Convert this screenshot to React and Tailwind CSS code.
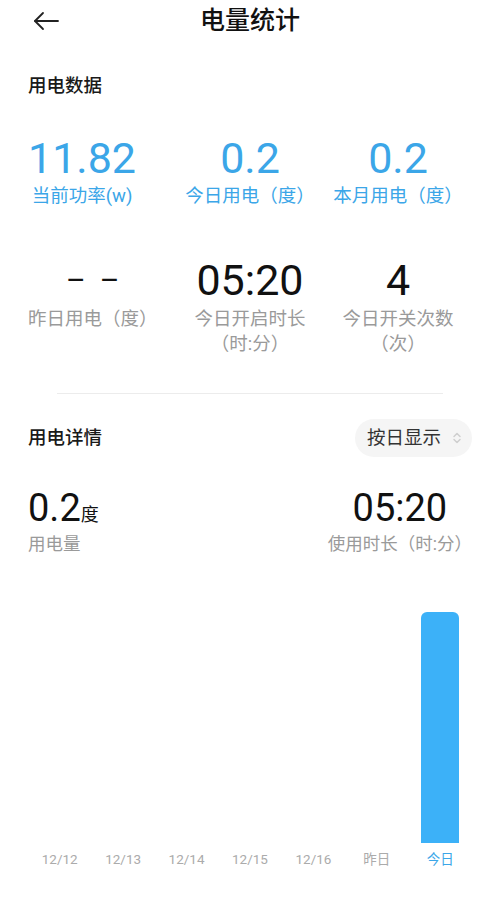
import React from "react";

const FONT = { fontFamily: 'Roboto, "Noto Sans CJK SC", sans-serif' };

function BackArrow() {
  return (
    <svg width="26" height="20" viewBox="0 0 26 20" fill="none" stroke="#222" strokeWidth="1.8" strokeLinecap="round" strokeLinejoin="round">
      <path d="M25 10H2" />
      <path d="M10 2L2 10L10 18" />
    </svg>
  );
}

function UpDown() {
  return (
    <svg width="10" height="14" viewBox="0 0 10 14" fill="none" stroke="#cfcfcf" strokeWidth="1.5" strokeLinecap="round" strokeLinejoin="round">
      <path d="M2 5.5L5 2.5L8 5.5" />
      <path d="M2 8.5L5 11.5L8 8.5" />
    </svg>
  );
}

const days = ["12/12", "12/13", "12/14", "12/15", "12/16", "昨日", "今日"];
const values = [0, 0, 0, 0, 0, 0, 1];

export default function App() {
  return (
    <div className="w-[500px] h-[901px] bg-white overflow-hidden text-[#111]" style={FONT}>
      {/* header */}
      <div className="h-[42px] grid grid-cols-[1fr_auto_1fr] items-center px-[33px]">
        <div className="flex items-center">
          <BackArrow />
        </div>
        <div className="text-[25px] leading-[42px] font-medium text-[#111]">电量统计</div>
        <div />
      </div>

      {/* 用电数据 */}
      <div className="mt-[31px] px-[28px] text-[18.5px] leading-[26px] font-medium text-[#1a1a1a]">用电数据</div>

      <div className="mt-[37px] px-[28px] grid grid-cols-3">
        <div className="justify-self-start flex flex-col items-center">
          <div className="text-[43px] leading-[44px] text-[#3ba6e8]">11.82</div>
          <div className="mt-[4px] text-[18.5px] leading-[25px] text-[#3ba6e8]">当前功率(w)</div>
        </div>
        <div className="justify-self-center flex flex-col items-center">
          <div className="text-[43px] leading-[44px] text-[#3ba6e8]">0.2</div>
          <div className="mt-[4px] text-[18.5px] leading-[25px] text-[#3ba6e8]">今日用电（度）</div>
        </div>
        <div className="justify-self-center flex flex-col items-center">
          <div className="text-[43px] leading-[44px] text-[#3ba6e8]">0.2</div>
          <div className="mt-[4px] text-[18.5px] leading-[25px] text-[#3ba6e8]">本月用电（度）</div>
        </div>
      </div>

      <div className="mt-[49px] px-[28px] grid grid-cols-3">
        <div className="justify-self-start flex flex-col items-center">
          <div className="flex gap-[14px] text-[30px] leading-[44px] text-[#111]">
            <span>–</span>
            <span>–</span>
          </div>
          <div className="mt-[5px] text-[18.5px] leading-[25px] text-[#9a9a9a]">昨日用电（度）</div>
        </div>
        <div className="justify-self-center flex flex-col items-center">
          <div className="text-[43px] leading-[44px] text-[#111]">05:20</div>
          <div className="mt-[5px] text-[18.5px] leading-[25px] text-[#9a9a9a] text-center">
            今日开启时长
            <br />
            （时:分）
          </div>
        </div>
        <div className="justify-self-center flex flex-col items-center">
          <div className="text-[43px] leading-[44px] text-[#111]">4</div>
          <div className="mt-[5px] text-[18.5px] leading-[25px] text-[#9a9a9a] text-center">
            今日开关次数
            <br />
            （次）
          </div>
        </div>
      </div>

      <div className="mt-[36px] mx-[57px] h-px bg-[#ececec]" />

      {/* 用电详情 */}
      <div className="mt-[25px] px-[28px] flex items-center justify-between">
        <div className="text-[18.5px] leading-[26px] font-medium text-[#1a1a1a]">用电详情</div>
        <div className="h-[38px] rounded-full bg-[#f5f5f5] flex items-center pl-[12px] pr-[10px] gap-[11px]">
          <span className="text-[18.5px] leading-[26px] text-[#333]">按日显示</span>
          <UpDown />
        </div>
      </div>

      <div className="mt-[32px] px-[28px] flex justify-between">
        <div className="flex flex-col items-start">
          <div className="flex items-baseline">
            <span className="text-[38px] leading-[38px] text-[#111]">0.2</span>
            <span className="text-[18px] leading-[20px] text-[#111]">度</span>
          </div>
          <div className="mt-[5px] text-[17.5px] leading-[24px] text-[#9a9a9a]">用电量</div>
        </div>
        <div className="flex flex-col items-center">
          <div className="text-[38px] leading-[38px] text-[#111]">05:20</div>
          <div className="mt-[5px] text-[17.5px] leading-[24px] text-[#9a9a9a]">使用时长（时:分）</div>
        </div>
      </div>

      {/* chart */}
      <div className="px-[28px]">
        <div className="h-[287px] grid grid-cols-7 items-end">
          {values.map((v, i) => (
            <div key={i} className="flex justify-center">
              {v > 0 ? (
                <div className="w-[38px] h-[231px] rounded-t-[6px] bg-[#3cb1f8]" />
              ) : null}
            </div>
          ))}
        </div>
        <div className="mt-[6px] grid grid-cols-7">
          {days.map((d, i) => (
            <div
              key={d}
              className={
                i === 6
                  ? "text-center text-[13.5px] leading-[20px] text-[#3ba6e8]"
                  : "text-center text-[13.5px] leading-[20px] text-[#ababab]"
              }
            >
              {d}
            </div>
          ))}
        </div>
      </div>
    </div>
  );
}
